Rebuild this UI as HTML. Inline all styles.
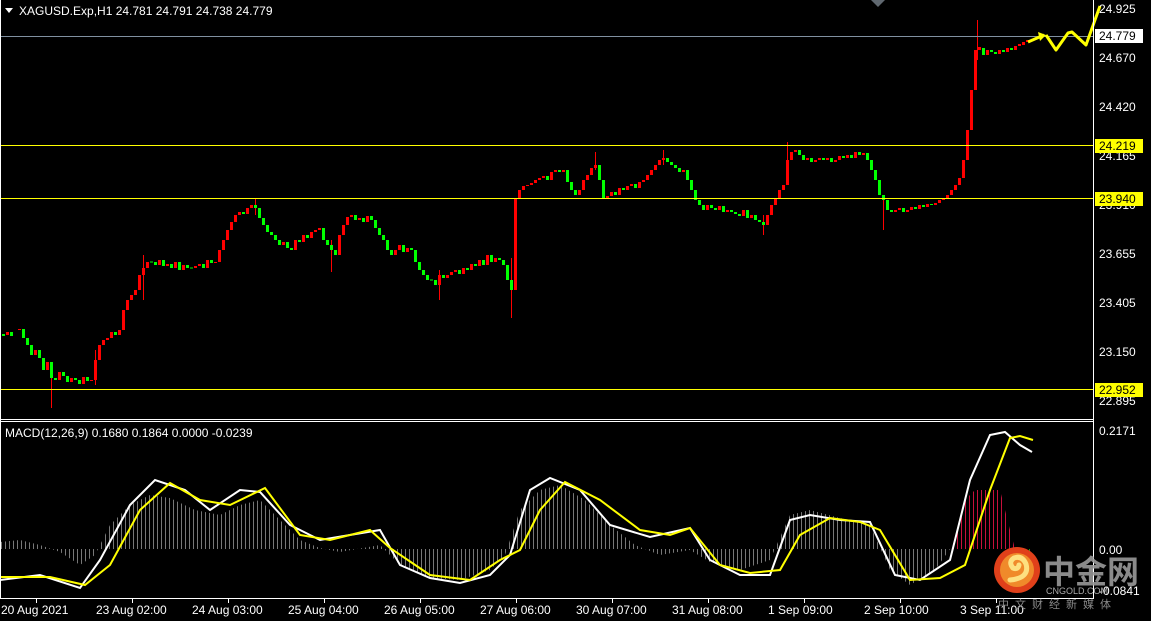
<!DOCTYPE html>
<html><head><meta charset="utf-8"><style>
html,body{margin:0;padding:0;background:#000;width:1151px;height:621px;overflow:hidden}
svg{display:block}
text{font-family:"Liberation Sans",sans-serif;font-size:12px;fill:#fff}
</style></head><body>
<svg width="1151" height="621" xmlns="http://www.w3.org/2000/svg">
<defs>
<pattern id="pg" x="0" y="0" width="4" height="621" patternUnits="userSpaceOnUse"><rect x="1" y="0" width="1" height="621" fill="#777"/></pattern>
<pattern id="pr" x="0" y="0" width="4" height="621" patternUnits="userSpaceOnUse"><rect x="1" y="0" width="1" height="621" fill="#c8103c"/></pattern>
<pattern id="pgr" x="0" y="0" width="4" height="621" patternUnits="userSpaceOnUse"><rect x="1" y="0" width="1" height="621" fill="#10a010"/></pattern>
</defs>
<rect width="1151" height="621" fill="#000"/>
<!-- histogram -->
<path d="M0,542 L20,540 L40,545 L60,552 L80,565 L95,555 L110,525 L130,505 L150,495 L170,498 L195,510 L220,515 L240,505 L260,500 L280,520 L300,540 L320,548 L340,552 L380,545 L400,565 L430,578 L460,580 L490,570 L505,555 L520,510 L540,490 L560,485 L585,500 L610,525 L635,545 L660,555 L690,550 L710,562 L740,570 L770,560 L790,515 L810,510 L840,518 L870,525 L890,570 L910,585 L935,570 L950,549 L0,549 Z" fill="url(#pg)"/>
<path d="M950,549 L955,540 L965,500 L975,490 L1000,490 L1010,530 L1015,549 Z" fill="url(#pr)"/>
<path d="M1015,549 L1020,560 L1032,560 L1032,549 Z" fill="url(#pgr)"/>
<!-- wicks -->
<path d="M51.5,370V408 M511.5,258V318 M977.5,20V60 M763.5,215V235 M883.5,200V230 M787.5,142V170 M439.5,270V300 M331.5,240V272 M595.5,152V170 M663.5,150V165 M255.5,198V215 M95.5,350V385 M143.5,255V300" stroke="#ff0000" stroke-width="1"/>
<!-- red candles (up) -->
<path stroke="#ff0000" stroke-width="3" fill="none" d="M7.5,335V332M19.5,330V329M35.5,355V350M47.5,370V362M59.5,380V372M71.5,382V378M83.5,384V377M91.5,381V380M95.5,380V360M99.5,360V345M103.5,345V340M107.5,340V338M111.5,338V332M119.5,335V330M123.5,330V310M127.5,310V300M131.5,300V295M135.5,295V290M139.5,290V275M143.5,275V268M147.5,268V262M159.5,265V260M167.5,266V264M175.5,268V262M183.5,270V265M195.5,268V266M199.5,266V264M207.5,268V260M215.5,263V262M219.5,262V250M223.5,250V240M227.5,240V230M231.5,230V222M235.5,222V215M239.5,215V212M247.5,214V208M251.5,208V205M283.5,245V242M295.5,250V240M303.5,242V235M311.5,238V232M315.5,232V230M319.5,230V228M339.5,255V235M343.5,235V225M347.5,225V217M351.5,217V215M359.5,220V218M367.5,222V216M395.5,255V250M399.5,250V245M407.5,252V248M439.5,285V275M447.5,278V275M451.5,275V272M455.5,272V270M463.5,274V268M471.5,270V264M479.5,266V260M487.5,265V255M495.5,262V258M515.5,290V198M519.5,198V190M523.5,190V186M527.5,186V185M531.5,185V183M535.5,183V180M539.5,180V178M543.5,178V176M551.5,180V172M555.5,172V170M563.5,172V170M579.5,195V190M583.5,190V180M587.5,180V175M591.5,175V168M595.5,168V165M607.5,198V196M611.5,196V192M619.5,195V188M627.5,190V186M631.5,186V184M639.5,188V182M643.5,182V180M647.5,180V175M651.5,175V170M655.5,170V165M659.5,165V160M663.5,160V158M683.5,172V170M707.5,210V205M719.5,210V206M727.5,212V210M743.5,216V210M751.5,218V215M767.5,225V215M771.5,215V205M775.5,205V198M779.5,198V190M783.5,190V185M787.5,185V160M791.5,160V152M795.5,152V150M807.5,160V158M815.5,162V160M819.5,160V158M827.5,160V158M835.5,162V160M839.5,160V156M847.5,158V155M855.5,158V152M863.5,155V153M895.5,212V210M899.5,210V208M907.5,212V210M911.5,210V207M919.5,209V205M927.5,207V204M935.5,205V203M939.5,203V200M943.5,200V198M947.5,198V195M951.5,195V190M955.5,190V185M959.5,185V178M963.5,178V160M967.5,160V130M971.5,130V90M975.5,90V50M979.5,50V47M987.5,55V50M999.5,54V50M1007.5,52V48M1015.5,50V46M1019.5,46V44M1023.5,45V42M1027.5,42V40"/>
<!-- green candles (down) -->
<path stroke="#00ff00" stroke-width="3" fill="none" d="M3.5,334V336M11.5,332V336M23.5,329V338M27.5,338V345M31.5,345V355M39.5,350V358M43.5,358V370M51.5,362V378M55.5,378V380M63.5,372V376M67.5,376V382M75.5,378V380M79.5,380V384M87.5,377V381M115.5,332V335M151.5,261.5V262.5M155.5,262V265M163.5,260V266M171.5,264V268M179.5,262V270M187.5,265V268M191.5,267.5V268.5M203.5,264V268M211.5,260V263M243.5,212V214M255.5,205V208M259.5,208V218M263.5,218V225M267.5,225V232M271.5,232V235M275.5,235V240M279.5,240V245M287.5,242V248M291.5,248V250M299.5,240V242M307.5,235V238M323.5,228V240M327.5,240V245M331.5,245V250M335.5,250V255M355.5,215V220M363.5,218V222M371.5,216V220M375.5,220V228M379.5,228V235M383.5,235V240M387.5,240V250M391.5,250V255M403.5,245V252M411.5,248V250M415.5,250V262M419.5,262V270M423.5,270V275M427.5,275V280M431.5,279.5V280.5M435.5,280V285M443.5,275V278M459.5,270V274M467.5,268V270M475.5,264V266M483.5,260V265M491.5,255V262M499.5,258V260M503.5,260V265M507.5,265V280M511.5,280V290M547.5,176V180M559.5,170V172M567.5,170V182M571.5,182V190M575.5,190V195M599.5,165V180M603.5,180V198M615.5,192V195M623.5,188V190M635.5,184V188M667.5,158V162M671.5,162V165M675.5,165V168M679.5,168V172M687.5,170V180M691.5,180V190M695.5,190V200M699.5,200V205M703.5,205V210M711.5,205V208M715.5,208V210M723.5,206V212M731.5,210V212M735.5,212V214M739.5,214V216M747.5,210V218M755.5,215V220M759.5,220V222M763.5,222V225M799.5,150V155M803.5,155V160M811.5,158V162M823.5,158V160M831.5,158V162M843.5,156V158M851.5,155V158M859.5,152V155M867.5,153V160M871.5,160V170M875.5,170V180M879.5,180V195M883.5,195V200M887.5,200V210M891.5,210V212M903.5,208V212M915.5,207V209M923.5,205V207M931.5,204V205M983.5,48V55M991.5,50V52M995.5,52V54M1003.5,50V52M1011.5,48V50M1031.5,39.5V40.5"/>
<!-- level lines -->
<line x1="0" y1="36.5" x2="1093" y2="36.5" stroke="#8090a0" stroke-width="1"/>
<line x1="0" y1="145.5" x2="1093" y2="145.5" stroke="#ffff00" stroke-width="1"/>
<line x1="0" y1="198.5" x2="1093" y2="198.5" stroke="#ffff00" stroke-width="1"/>
<line x1="0" y1="389.5" x2="1093" y2="389.5" stroke="#ffff00" stroke-width="1"/>
<!-- MACD lines -->
<polyline fill="none" stroke="#fff" stroke-width="2" points="0,580 40,575 80,588 100,560 130,505 155,480 185,490 210,510 240,490 260,492 290,525 320,540 380,530 400,565 430,578 460,583 490,575 510,555 530,490 550,478 580,490 610,525 650,537 690,528 710,560 740,575 770,575 790,520 810,515 840,520 870,522 895,575 920,580 950,560 970,480 990,435 1005,432 1020,445 1032,452"/>
<polyline fill="none" stroke="#ffff00" stroke-width="2" points="0,577 50,577 85,585 110,565 140,510 170,483 200,500 230,505 265,488 300,535 330,540 370,530 390,548 430,575 470,580 500,560 520,550 540,510 565,482 600,500 640,530 670,535 690,528 720,565 750,573 780,570 800,535 830,518 860,522 880,530 910,580 940,578 965,565 990,490 1010,438 1020,436 1033,440"/>
<!-- forecast arrows -->
<polyline points="1028,42 1044,35" fill="none" stroke="#ffff00" stroke-width="3"/>
<polyline points="1046,35 1056,50 1068,33 1072,32 1086,45 1100,6" fill="none" stroke="#ffff00" stroke-width="3" stroke-linejoin="round"/>
<polygon points="1038,32 1046,35 1040,41" fill="#ffff00"/>
<polygon points="871,0 885,0 878,7" fill="#606870"/>
<!-- frame -->
<line x1="1093.5" y1="0" x2="1093.5" y2="599" stroke="#fff"/>
<line x1="0" y1="419.5" x2="1093" y2="419.5" stroke="#fff"/>
<line x1="0" y1="421.5" x2="1093" y2="421.5" stroke="#fff"/>
<line x1="0" y1="598.5" x2="1094" y2="598.5" stroke="#fff"/>
<line x1="0.5" y1="0" x2="0.5" y2="599" stroke="#fff"/>
<path d="M36.5,598V603M132.5,598V603M228.5,598V603M324.5,598V603M420.5,598V603M516.5,598V603M612.5,598V603M708.5,598V603M804.5,598V603M900.5,598V603M996.5,598V603" stroke="#fff"/>
<polygon points="5,8 13,8 9,13" fill="#fff"/>
<text x="19" y="15">XAGUSD.Exp,H1  24.781 24.791 24.738 24.779</text>
<text x="5" y="437">MACD(12,26,9) 0.1680 0.1864 0.0000 -0.0239</text>
<text x="1099" y="13">24.925</text>
<text x="1099" y="62">24.670</text>
<text x="1099" y="111">24.420</text>
<text x="1099" y="160">24.165</text>
<text x="1099" y="209">23.910</text>
<text x="1099" y="258">23.655</text>
<text x="1099" y="307">23.405</text>
<text x="1099" y="356">23.150</text>
<text x="1099" y="405">22.895</text>
<rect x="1095" y="29" width="48" height="14" fill="#fff"/><text x="1099" y="40" style="fill:#000">24.779</text>
<rect x="1095" y="139" width="48" height="14" fill="#ffff00"/><text x="1099" y="150" style="fill:#000">24.219</text>
<rect x="1095" y="192" width="48" height="14" fill="#ffff00"/><text x="1099" y="203" style="fill:#000">23.940</text>
<rect x="1095" y="383" width="48" height="14" fill="#ffff00"/><text x="1099" y="394" style="fill:#000">22.952</text>
<text x="1099" y="435">0.2171</text>
<text x="1099" y="554">0.00</text>
<text x="1099" y="595">-0.0841</text>
<text x="1" y="614">20 Aug 2021</text>
<text x="96" y="614">23 Aug 02:00</text>
<text x="192" y="614">24 Aug 03:00</text>
<text x="288" y="614">25 Aug 04:00</text>
<text x="384" y="614">26 Aug 05:00</text>
<text x="480" y="614">27 Aug 06:00</text>
<text x="576" y="614">30 Aug 07:00</text>
<text x="672" y="614">31 Aug 08:00</text>
<text x="768" y="614">1 Sep 09:00</text>
<text x="864" y="614">2 Sep 10:00</text>
<text x="960" y="614">3 Sep 11:00</text>
<!-- logo -->
<circle cx="1017" cy="570" r="23" fill="#e0401a"/>
<circle cx="1017" cy="570" r="17" fill="#f08a2a"/>
<path d="M1010,580 Q1030,578 1026,564 Q1022,555 1014,558 Q1008,562 1013,568 Q1018,570 1019,565" fill="none" stroke="#fde080" stroke-width="5" stroke-linecap="round"/>
<text x="1043" y="583" style="font-family:'Noto Sans CJK SC',sans-serif;font-size:32px;font-weight:bold;fill:#9a9a9a;opacity:.9">中金网</text>
<text x="1046" y="594" style="font-size:9px;fill:#aaa">CNGOLD.COM</text>
<text x="998" y="608" style="font-family:'Noto Sans CJK SC',sans-serif;font-size:11px;fill:#888;letter-spacing:6px">中文财经新媒体</text>
</svg>
</body></html>
